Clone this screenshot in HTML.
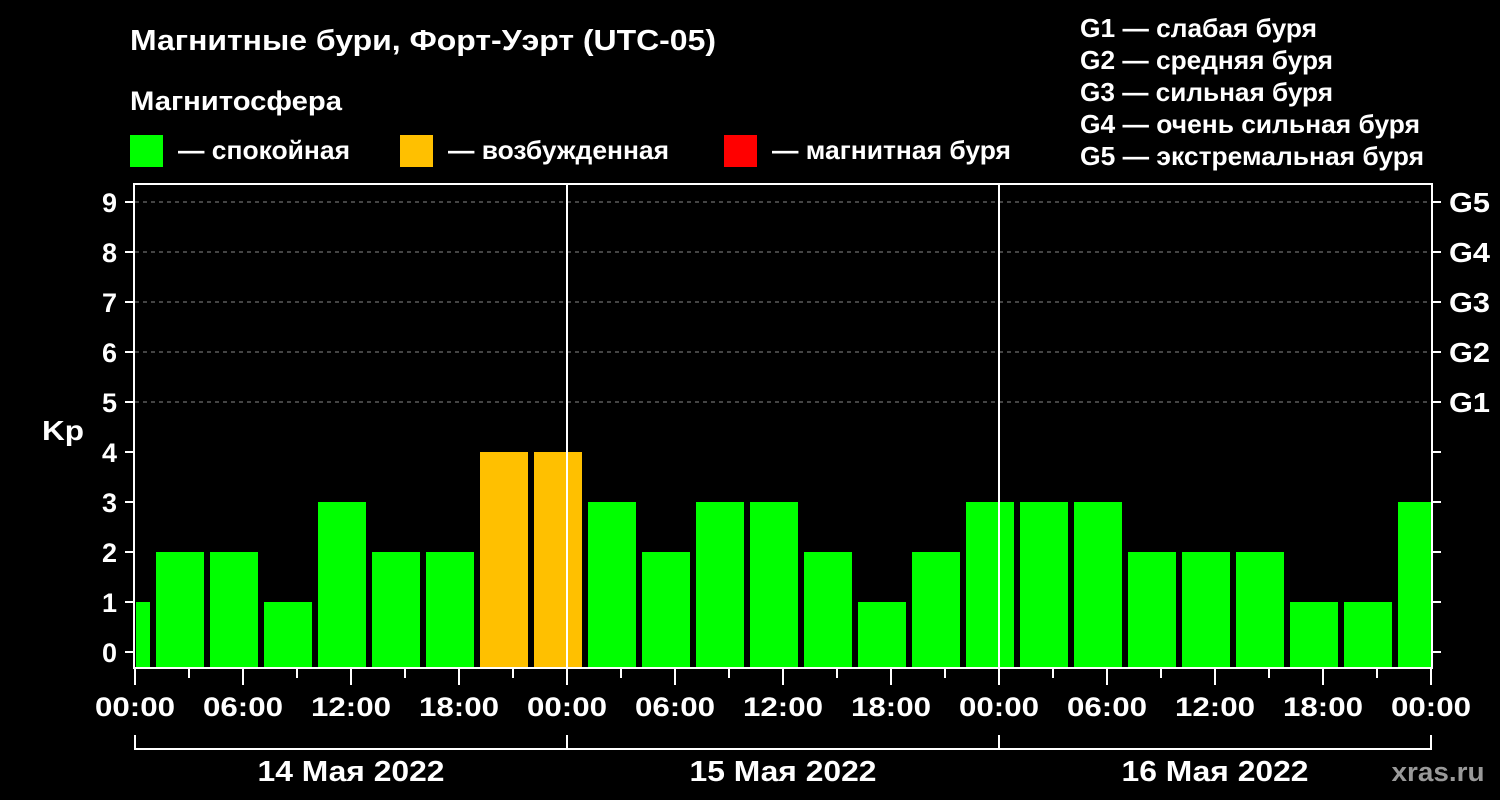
<!DOCTYPE html><html><head><meta charset="utf-8"><style>body{margin:0;background:#000}svg{display:block}text{font-family:"Liberation Sans",Arial,sans-serif;font-weight:bold;fill:#fff}</style></head><body>
<svg width="1500" height="800" viewBox="0 0 1500 800">
<rect width="1500" height="800" fill="#000"/>
<text x="130" y="50" font-size="29" textLength="586" lengthAdjust="spacingAndGlyphs">Магнитные бури, Форт-Уэрт (UTC-05)</text>
<text x="130" y="110" font-size="27" textLength="212" lengthAdjust="spacingAndGlyphs">Магнитосфера</text>
<rect x="130" y="135" width="33" height="32" fill="#00ff00"/><text x="178" y="159" font-size="26" textLength="172" lengthAdjust="spacingAndGlyphs">— спокойная</text>
<rect x="400" y="135" width="33" height="32" fill="#ffc000"/><text x="448" y="159" font-size="26" textLength="221" lengthAdjust="spacingAndGlyphs">— возбужденная</text>
<rect x="724" y="135" width="33" height="32" fill="#ff0000"/><text x="772" y="159" font-size="26" textLength="239" lengthAdjust="spacingAndGlyphs">— магнитная буря</text>
<g font-size="26"><text x="1080" y="37" textLength="237" lengthAdjust="spacingAndGlyphs">G1 — слабая буря</text><text x="1080" y="69" textLength="253" lengthAdjust="spacingAndGlyphs">G2 — средняя буря</text><text x="1080" y="101" textLength="253" lengthAdjust="spacingAndGlyphs">G3 — сильная буря</text><text x="1080" y="133" textLength="340" lengthAdjust="spacingAndGlyphs">G4 — очень сильная буря</text><text x="1080" y="165" textLength="344" lengthAdjust="spacingAndGlyphs">G5 — экстремальная буря</text></g>
<g stroke="#888" stroke-dasharray="4,4" stroke-width="1"><line x1="135" x2="1431" y1="202" y2="202"/><line x1="135" x2="1431" y1="252" y2="252"/><line x1="135" x2="1431" y1="302" y2="302"/><line x1="135" x2="1431" y1="352" y2="352"/><line x1="135" x2="1431" y1="402" y2="402"/></g>
<g id="bars"></g>
<rect x="134" y="184" width="1298" height="484" fill="none" stroke="#fff" stroke-width="2"/>
<line x1="567" x2="567" y1="183" y2="668" stroke="#fff" stroke-width="2"/>
<line x1="999" x2="999" y1="183" y2="668" stroke="#fff" stroke-width="2"/>
<g id="ax" stroke="#fff" stroke-width="2"></g>
<g font-size="27" text-anchor="end" id="yl"></g>
<text x="42" y="440" font-size="28" textLength="42" lengthAdjust="spacingAndGlyphs">Kp</text>
<g font-size="28"><text x="1449" y="212" textLength="41" lengthAdjust="spacingAndGlyphs">G5</text><text x="1449" y="262" textLength="41" lengthAdjust="spacingAndGlyphs">G4</text><text x="1449" y="312" textLength="41" lengthAdjust="spacingAndGlyphs">G3</text><text x="1449" y="362" textLength="41" lengthAdjust="spacingAndGlyphs">G2</text><text x="1449" y="412" textLength="41" lengthAdjust="spacingAndGlyphs">G1</text></g>
<g font-size="27" text-anchor="middle" id="xl"></g>
<g stroke="#fff" stroke-width="2" fill="none"><polyline points="135,735 135,749 1431,749 1431,735"/><line x1="567" x2="567" y1="735" y2="749"/><line x1="999" x2="999" y1="735" y2="749"/></g>
<g font-size="29" text-anchor="middle"><text x="351" y="781" textLength="187" lengthAdjust="spacingAndGlyphs">14 Мая 2022</text><text x="783" y="781" textLength="187" lengthAdjust="spacingAndGlyphs">15 Мая 2022</text><text x="1215" y="781" textLength="187" lengthAdjust="spacingAndGlyphs">16 Мая 2022</text></g>
<text x="1438" y="781" font-size="27" style="fill:#999" text-anchor="middle" textLength="93" lengthAdjust="spacingAndGlyphs">xras.ru</text>
</svg>
<script>
var ns="http://www.w3.org/2000/svg";function el(p,t,a,tx){var e=document.createElementNS(ns,t);for(var k in a)e.setAttribute(k,a[k]);if(tx)e.textContent=tx;document.getElementById(p).appendChild(e);}
var v=[2,2,1,3,2,2,4,4,3,2,3,3,2,1,2,3,3,3,2,2,2,1,1,3];
el("bars","rect",{x:136,y:602,width:14,height:66,fill:"#00ff00"});
for(var i=0;i<24;i++){var x=156+54*i,w=48;if(x+w>1431)w=1431-x;var y=652-50*v[i];el("bars","rect",{x:x,y:y,width:w,height:668-y,fill:v[i]>=4?"#ffc000":"#00ff00"});}
for(var k=0;k<=9;k++){var y=652-50*k;el("ax","line",{x1:125,x2:134,y1:y,y2:y});el("ax","line",{x1:1432,x2:1441,y1:y,y2:y});el("yl","text",{x:117,y:y+10},""+k);}
for(var h=0;h<=72;h+=3){var x=135+18*h;var lg=h%6==0;el("ax","line",{x1:x,x2:x,y1:668,y2:lg?685:678});if(lg){var hh=h%24;el("xl","text",{x:x,y:716,textLength:80,lengthAdjust:"spacingAndGlyphs"},(hh<10?"0":"")+hh+":00");}}
</script>
</body></html>
